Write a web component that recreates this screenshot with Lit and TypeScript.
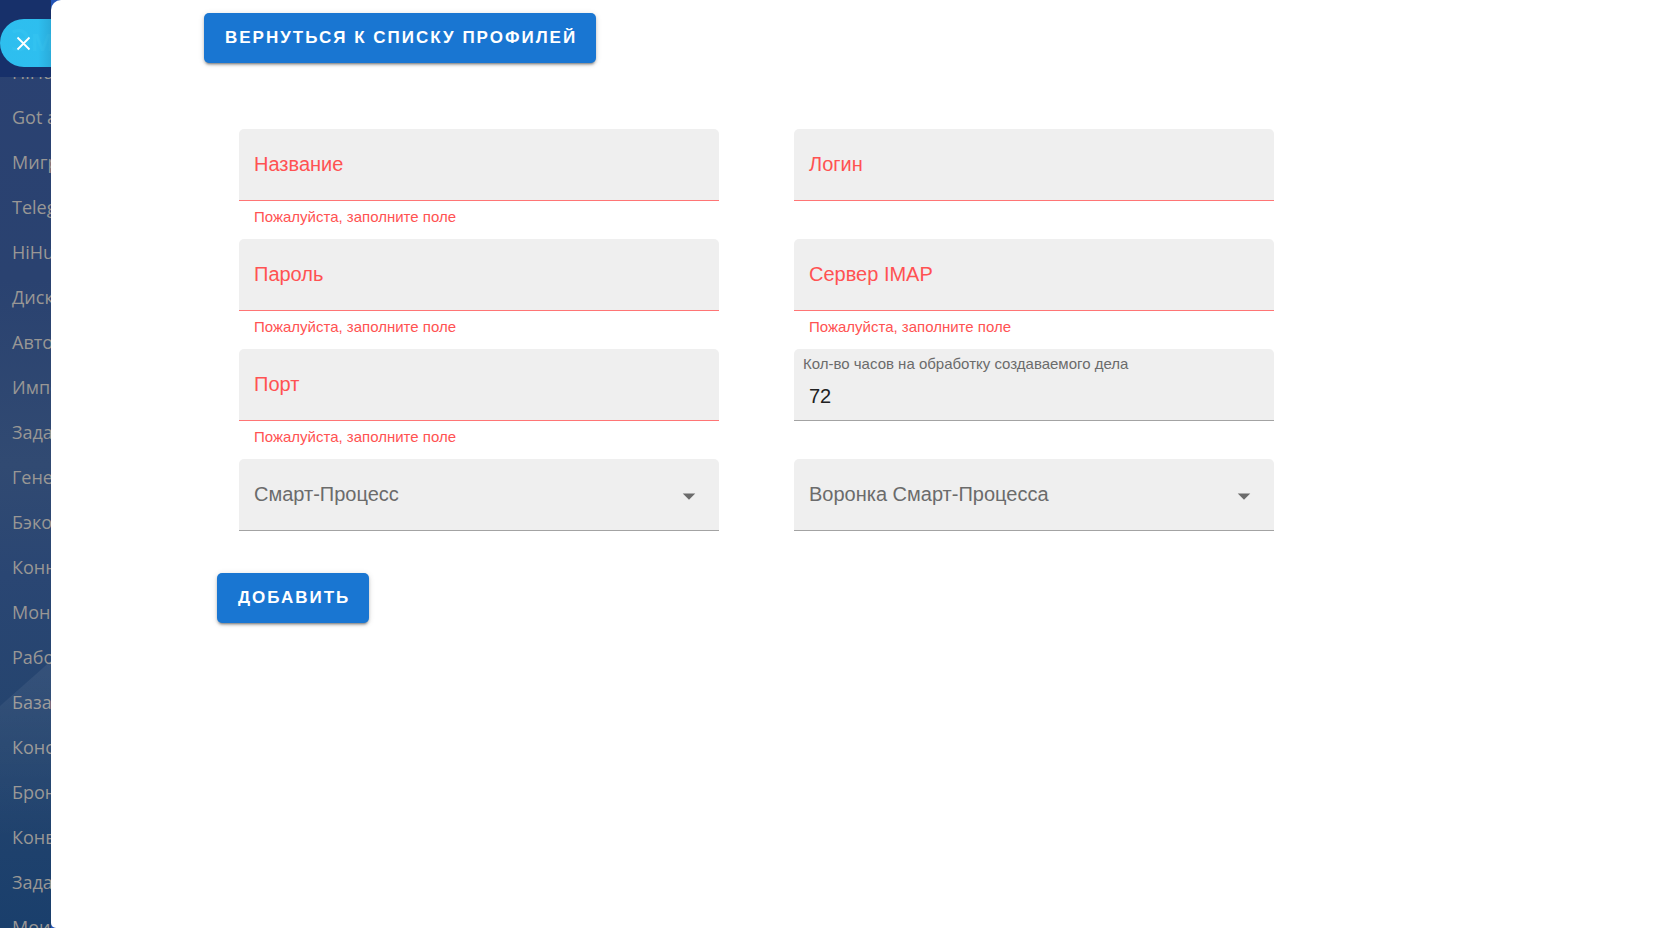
import { LitElement, html, css, nothing } from "lit";
import { customElement, property } from "lit/decorators.js";

const MENU = [
  "HiHub", "Got app", "Миграция", "Telegram", "HiHub", "Диск", "Автоматизация", "Импорт",
  "Задачи", "Генератор", "Бэкофис", "Коннектор", "Мониторинг", "Работа", "База знаний",
  "Конструктор", "Бронирование", "Конвертер", "Задачи", "Мои отчёты",
];

@customElement("side-menu")
class SideMenu extends LitElement {
  static styles = css`
    :host {
      display: block;
      height: 100%;
      overflow: hidden;
      background: linear-gradient(180deg, #2a4172 0%, #2a4270 30%, #314a72 50%, #2a4673 62%, #24446e 80%, #1a3f6c 100%);
      font-family: "Open Sans", "Noto Sans", sans-serif;
    }
    .head {
      position: absolute;
      inset: 0 0 auto 0;
      height: 77px;
      box-sizing: border-box;
      padding: 18px 0 0 11px;
      overflow: hidden;
      background: #17306a;
      color: #6f7480;
      font-size: 30px;
      line-height: 44px;
      font-weight: 600;
    }
    .shine {
      position: absolute;
      left: 0;
      top: 660px;
      width: 52px;
      height: 180px;
    }
    ul {
      margin: 0;
      padding: 50px 0 0 12px;
      list-style: none;
    }
    li {
      height: 45px;
      line-height: 45px;
      font-size: 18px;
      white-space: nowrap;
    }
    a {
      color: #999795;
      text-decoration: none;
    }
  `;

  render() {
    return html`
      <svg class="shine" viewBox="0 0 52 180" aria-hidden="true">
        <defs>
          <linearGradient id="fade" x1="0" y1="0" x2="0" y2="1">
            <stop offset="0" stop-color="#fff" stop-opacity=".07"></stop>
            <stop offset="1" stop-color="#fff" stop-opacity="0"></stop>
          </linearGradient>
        </defs>
        <path d="M0 46 L52 0 V180 H0Z" fill="url(#fade)"></path>
      </svg>
      <nav><ul>${MENU.map((t) => html`<li><a href="#">${t}</a></li>`)}</ul></nav>
      <div class="head">Эмка</div>
    `;
  }
}

@customElement("form-field")
class FormField extends LitElement {
  @property() label = "";
  @property() value = "";
  @property() error = "";
  @property() type = "text";
  @property({ type: Boolean }) invalid = false;

  static styles = css`
    :host { display: block; }
    .box {
      display: grid;
      height: 72px;
      box-sizing: border-box;
      border-bottom: 1px solid #a3a3a3;
      border-radius: 5px 5px 0 0;
      background: #efefef;
      color: #6b6b6b;
    }
    .box > * { grid-area: 1 / 1; }
    label {
      align-self: center;
      padding: 0 15px 2px;
      font-size: 20px;
      line-height: 24px;
      pointer-events: none;
      z-index: 1;
    }
    input, select {
      width: 100%;
      height: 71px;
      box-sizing: border-box;
      margin: 0;
      padding: 24px 15px 0;
      border: 0;
      outline: 0;
      appearance: none;
      background: transparent;
      color: #212121;
      font: 20px "Liberation Sans", Arial, sans-serif;
    }
    .filled label {
      align-self: start;
      padding: 5px 9px 0;
      font-size: 15px;
      line-height: 20px;
    }
    .invalid {
      border-color: #ff7575;
      color: #ff5252;
    }
    .arrow {
      align-self: center;
      justify-self: end;
      width: 30px;
      height: 30px;
      margin: 2px 15px 0 0;
      pointer-events: none;
    }
    .hint {
      height: 38px;
      box-sizing: border-box;
      padding: 6px 15px 0;
      color: #ff5252;
      font-size: 15px;
      line-height: 20px;
    }
  `;

  render() {
    const control = this.type === "select"
      ? html`<select id="control"><option></option></select>
          <svg class="arrow" viewBox="0 0 24 24" aria-hidden="true">
            <path d="M7 10l5 5 5-5z" fill="#6b6b6b"></path>
          </svg>`
      : html`<input id="control" type=${this.type} .value=${this.value} aria-describedby="hint">`;
    return html`
      <div class="box ${this.value ? "filled" : ""} ${this.invalid ? "invalid" : ""}">
        ${control}
        <label for="control">${this.label}</label>
      </div>
      <div class="hint" id="hint">${this.error || nothing}</div>
    `;
  }
}

@customElement("app-root")
class AppRoot extends LitElement {
  static styles = css`
    :host {
      display: grid;
      grid-template-columns: 51px minmax(0, 1fr);
      height: 100vh;
      overflow: hidden;
      background: #2354b5;
      font-family: "Liberation Sans", Arial, sans-serif;
    }
    .rail {
      position: relative;
      min-height: 0;
    }
    .close {
      position: absolute;
      left: 0;
      top: 19px;
      width: 51px;
      height: 48px;
      padding: 0;
      border: 0;
      border-radius: 24px 0 0 24px;
      background: linear-gradient(90deg, rgba(47, 198, 246, .95) 75%, rgba(43, 178, 224, .95));
      cursor: pointer;
    }
    .close svg {
      display: block;
      width: 15px;
      height: 15px;
      margin-left: 16px;
    }
    main {
      box-sizing: border-box;
      padding: 13px 153px 0;
      border-radius: 10px 0 0 5px;
      background: #fff;
      overflow: auto;
    }
    .btn {
      height: 50px;
      padding: 0 19px 0 21px;
      border: 0;
      border-radius: 5px;
      background: #1976d2;
      box-shadow: 0 3px 2px -2px rgba(0, 0, 0, .3), 0 2px 3px rgba(0, 0, 0, .2), 0 1px 6px rgba(0, 0, 0, .12);
      color: #fff;
      font: bold 17px "Liberation Sans", Arial, sans-serif;
      letter-spacing: 2px;
      text-transform: uppercase;
      cursor: pointer;
    }
    form { padding: 66px 245px 0 13px; }
    .fields {
      display: grid;
      grid-template-columns: repeat(2, minmax(0, 1fr));
      column-gap: 75px;
      padding-left: 22px;
      margin-bottom: 4px;
    }
  `;

  render() {
    const required = "Пожалуйста, заполните поле";
    return html`
      <aside class="rail">
        <side-menu></side-menu>
        <button class="close" type="button" aria-label="Закрыть">
          <svg viewBox="0 0 15 15" aria-hidden="true">
            <path d="M1.5 1.5 13.5 13.5M13.5 1.5 1.5 13.5" stroke="#fff" stroke-width="1.8"></path>
          </svg>
        </button>
      </aside>
      <main>
        <button class="btn" type="button">Вернуться к списку профилей</button>
        <form>
          <div class="fields">
            <form-field label="Название" error=${required} invalid></form-field>
            <form-field label="Логин" invalid></form-field>
            <form-field label="Пароль" type="password" error=${required} invalid></form-field>
            <form-field label="Сервер IMAP" error=${required} invalid></form-field>
            <form-field label="Порт" error=${required} invalid></form-field>
            <form-field label="Кол-во часов на обработку создаваемого дела" value="72"></form-field>
            <form-field label="Смарт-Процесс" type="select"></form-field>
            <form-field label="Воронка Смарт-Процесса" type="select"></form-field>
          </div>
          <button class="btn" type="button">Добавить</button>
        </form>
      </main>
    `;
  }
}
